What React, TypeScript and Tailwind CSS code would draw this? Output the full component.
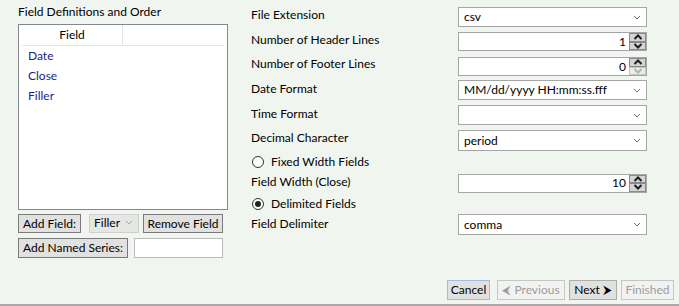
import React from "react";

const font = { fontFamily: "Lato, 'Noto Sans', sans-serif" };

function Chevron({ light = false }: { light?: boolean }) {
  return (
    <svg width="8" height="5" viewBox="0 0 8 5" className="shrink-0">
      <polyline points="1,1 4,4 7,1" fill="none" stroke={light ? "#a8a8a8" : "#6d6d6d"} strokeWidth="1" />
    </svg>
  );
}

function Combo({ value, h = "h-[20px]" }: { value: string; h?: string }) {
  return (
    <div className={`flex w-[189px] ${h} items-center justify-between border border-[#a6a6a6] bg-white pl-[5px] pr-[5px] text-[12px] text-black`}>
      <span>{value}</span>
      <Chevron />
    </div>
  );
}

function Arrow({ up, disabled }: { up: boolean; disabled?: boolean }) {
  return (
    <div className={`flex h-1/2 w-full items-center justify-center border ${disabled ? "border-[#c4c4c4] bg-[#ececec]" : "border-[#8a8a8a] bg-[#d4d4d4]"}`}>
      <svg width="10" height="6" viewBox="0 0 10 6">
        <polyline
          points={up ? "1.5,5 5,1.5 8.5,5" : "1.5,1 5,4.5 8.5,1"}
          fill="none"
          stroke={disabled ? "#b4b4b4" : "#1e1e1e"}
          strokeWidth="2"
        />
      </svg>
    </div>
  );
}

function Spinner({ value, downDisabled }: { value: string; downDisabled?: boolean }) {
  return (
    <div className="flex h-[19px] w-[189px] border border-[#a6a6a6] bg-white">
      <div className="flex flex-1 items-center justify-end pr-[3px] text-[12px] text-black">{value}</div>
      <div className="flex h-full w-[17px] flex-col">
        <Arrow up />
        <Arrow up={false} disabled={downDisabled} />
      </div>
    </div>
  );
}

function Radio({ checked, label }: { checked?: boolean; label: string }) {
  return (
    <div className="flex items-center gap-[7px]">
      <div className="flex h-[12px] w-[12px] items-center justify-center rounded-full border border-[#333] bg-white">
        {checked && <div className="h-[6px] w-[6px] rounded-full bg-[#222]" />}
      </div>
      <span>{label}</span>
    </div>
  );
}

function Btn({ children, className = "" }: { children: React.ReactNode; className?: string }) {
  return (
    <div className={`flex h-[19px] items-center justify-center border border-[#7a7a7a] bg-[#e1e1e1] text-[12px] text-black ${className}`}>
      {children}
    </div>
  );
}

export default function App() {
  return (
    <div className="flex h-[306px] w-[679px] flex-col bg-[#f0f5ef] text-[12px] text-black" style={font}>
      <div className="flex flex-1">
        {/* left panel */}
        <div className="flex w-[240px] flex-col pl-[18px]">
          <div className="mt-[4px] h-[16px] leading-[16px]">Field Definitions and Order</div>
          <div className="mt-[4px] flex h-[186px] w-[210px] flex-col border border-[#828790] bg-white px-[3px]">
            <div className="flex h-[21px] border-b border-[#e5e5e5]">
              <div className="flex w-[101px] items-center justify-center border-r border-[#e5e5e5]">Field</div>
            </div>
            <div className="flex flex-col pl-[6px] text-[#1c1c8c]">
              <div className="flex h-[20px] items-center">Date</div>
              <div className="flex h-[20px] items-center">Close</div>
              <div className="flex h-[20px] items-center">Filler</div>
            </div>
          </div>
          <div className="mt-[4px] flex items-center">
            <Btn className="w-[63px]">Add Field:</Btn>
            <div className="ml-[8px] flex h-[19px] w-[50px] items-center justify-between border border-[#cfcfcf] bg-[#e6e6e6] pl-[4px] pr-[5px] pb-[2px]">
              <span>Filler</span>
              <Chevron light />
            </div>
            <Btn className="ml-[4px] w-[80px]">Remove Field</Btn>
          </div>
          <div className="mt-[5px] flex items-center">
            <Btn className="h-[20px] w-[110px]">Add Named Series:</Btn>
            <div className="ml-[6px] h-[20px] w-[89px] border border-[#bcbcbc] bg-white" />
          </div>
        </div>

        {/* right panel */}
        <div className="ml-[11px] flex flex-1 flex-col">
          <div className="mt-[7px] flex h-[20px] items-center justify-between pr-[32px]">
            <span className="pb-[4px]">File Extension</span>
            <Combo value="csv" />
          </div>
          <div className="mt-[5px] flex h-[19px] items-center justify-between pr-[32px]">
            <span className="pb-[4px]">Number of Header Lines</span>
            <Spinner value="1" />
          </div>
          <div className="mt-[6px] flex h-[19px] items-center justify-between pr-[32px]">
            <span className="pb-[5px]">Number of Footer Lines</span>
            <Spinner value="0" downDisabled />
          </div>
          <div className="mt-[4px] flex h-[20px] items-center justify-between pr-[32px]">
            <span className="pb-[3px]">Date Format</span>
            <Combo value="MM/dd/yyyy HH:mm:ss.fff" />
          </div>
          <div className="mt-[5px] flex h-[20px] items-center justify-between pr-[32px]">
            <span className="pb-[3px]">Time Format</span>
            <Combo value="" />
          </div>
          <div className="mt-[5px] flex h-[21px] items-center justify-between pr-[32px]">
            <span className="pb-[5px]">Decimal Character</span>
            <Combo value="period" h="h-[21px]" />
          </div>
          <div className="flex h-[21px] items-center pl-[1px]">
            <Radio label="Fixed Width Fields" />
          </div>
          <div className="mt-[1px] flex h-[20px] items-center justify-between pr-[32px]">
            <span className="pb-[3px]">Field Width (Close)</span>
            <Spinner value="10" />
          </div>
          <div className="flex h-[21px] items-center pl-[1px]">
            <Radio checked label="Delimited Fields" />
          </div>
          <div className="flex h-[21px] items-center justify-between pr-[32px]">
            <span className="pb-[2px]">Field Delimiter</span>
            <Combo value="comma" h="h-[21px]" />
          </div>
        </div>
      </div>

      {/* bottom buttons */}
      <div className="flex justify-end gap-[4px] pb-[4px] pr-[5px]">
        <div className="flex h-[20px] w-[43px] items-center justify-center border border-[#9fbde0] bg-[#e1e1e1]">Cancel</div>
        <div className="ml-[3px] flex h-[20px] w-[68px] items-center justify-center border border-[#c6c6c6] bg-[#f2f2f2] text-[#9d9d9d]">&#x2B9C; Previous</div>
        <div className="flex h-[20px] w-[48px] items-center justify-center border border-[#adadad] bg-[#e1e1e1]">Next &#x2B9E;</div>
        <div className="flex h-[20px] w-[53px] items-center justify-center border border-[#c6c6c6] bg-[#f2f2f2] text-[#9d9d9d]">Finished</div>
      </div>
      <div className="h-[2px] bg-[#a9a9a9]" />
    </div>
  );
}
